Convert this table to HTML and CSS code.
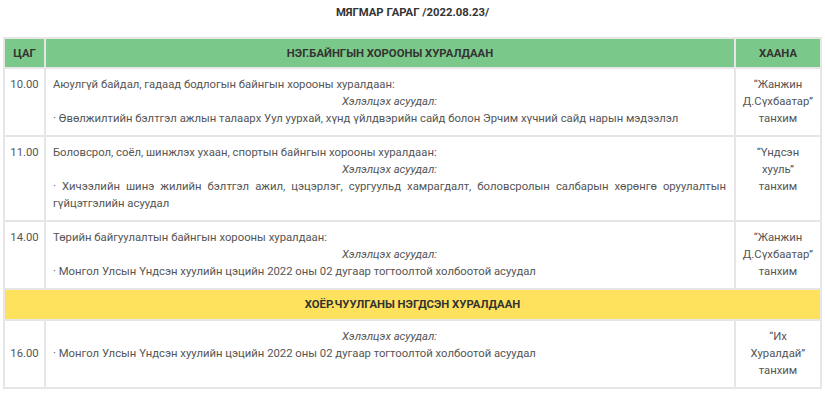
FILE: index.html
```html
<!DOCTYPE html>
<html lang="mn">
<head>
<meta charset="utf-8">
<title>Мягмар гараг</title>
<link rel="stylesheet" href="styles.css">
</head>
<body>
<div class="page">
  <h1 class="day-title">МЯГМАР ГАРАГ /2022.08.23/</h1>
  <table class="schedule">
    <colgroup>
      <col class="col-time">
      <col class="col-topic">
      <col class="col-place">
    </colgroup>
    <thead>
      <tr class="head-green">
        <th>ЦАГ</th>
        <th>НЭГ.БАЙНГЫН ХОРООНЫ ХУРАЛДААН</th>
        <th>ХААНА</th>
      </tr>
    </thead>
    <tbody>
      <tr>
        <td class="time">10.00</td>
        <td class="topic">
          <p>Аюулгүй байдал, гадаад бодлогын байнгын хорооны хуралдаан:</p>
          <p class="sub">Хэлэлцэх асуудал:</p>
          <p class="item">· Өвөлжилтийн бэлтгэл ажлын талаарх Уул уурхай, хүнд үйлдвэрийн сайд болон Эрчим хүчний сайд нарын мэдээлэл</p>
        </td>
        <td class="place">“Жанжин<br>Д.Сүхбаатар”<br>танхим</td>
      </tr>
      <tr>
        <td class="time">11.00</td>
        <td class="topic">
          <p>Боловсрол, соёл, шинжлэх ухаан, спортын байнгын хорооны хуралдаан:</p>
          <p class="sub">Хэлэлцэх асуудал:</p>
          <p class="item">· Хичээлийн шинэ жилийн бэлтгэл ажил, цэцэрлэг, сургуульд хамрагдалт, боловсролын салбарын хөрөнгө оруулалтын гүйцэтгэлийн асуудал</p>
        </td>
        <td class="place">“Үндсэн<br>хууль”<br>танхим</td>
      </tr>
      <tr>
        <td class="time">14.00</td>
        <td class="topic">
          <p>Төрийн байгуулалтын байнгын хорооны хуралдаан:</p>
          <p class="sub">Хэлэлцэх асуудал:</p>
          <p class="item">· Монгол Улсын Үндсэн хуулийн цэцийн 2022 оны 02 дугаар тогтоолтой холбоотой асуудал</p>
        </td>
        <td class="place">“Жанжин<br>Д.Сүхбаатар”<br>танхим</td>
      </tr>
      <tr class="head-yellow">
        <th colspan="3">ХОЁР.ЧУУЛГАНЫ НЭГДСЭН ХУРАЛДААН</th>
      </tr>
      <tr>
        <td class="time middle">16.00</td>
        <td class="topic">
          <p class="sub">Хэлэлцэх асуудал:</p>
          <p class="item">· Монгол Улсын Үндсэн хуулийн цэцийн 2022 оны 02 дугаар тогтоолтой холбоотой асуудал</p>
          <p class="blank">&nbsp;</p>
        </td>
        <td class="place">“Их<br>Хуралдай”<br>танхим</td>
      </tr>
    </tbody>
  </table>
</div>
</body>
</html>
```

FILE: styles.css
```css
html, body {
  margin: 0;
  padding: 0;
  background: #ffffff;
}

body {
  font-family: Roboto, "Liberation Sans", Arial, sans-serif;
  font-size: 11.3px;
  line-height: 17px;
  color: #555555;
}

.page {
  padding: 4px 3px 0 3px;
}

.day-title {
  margin: 0 0 16px 0;
  text-align: center;
  font-size: 11.3px;
  line-height: 17px;
  font-weight: bold;
  color: #333333;
}

.schedule {
  width: 819px;
  border-collapse: collapse;
  table-layout: fixed;
}

.col-time { width: 41px; }
.col-place { width: 86px; }

.schedule th,
.schedule td {
  border: 2px solid #e6e6e6;
  vertical-align: top;
}

.schedule th {
  padding: 6px 4px 5px;
  font-weight: bold;
  color: #333333;
  text-align: center;
}

.head-green th {
  background: #7bc98a;
}

.head-yellow th {
  background: #fee15c;
  padding: 6px 4px 6px;
}

.schedule td {
  padding: 7px 8px 8px 7px;
}

.schedule td.time {
  padding: 7px 2px 8px;
  text-align: center;
}

.schedule td.time.middle {
  vertical-align: middle;
}

.schedule td.place {
  padding: 7px 0 8px;
  text-align: center;
}

.topic p {
  margin: 0;
}

.topic .sub {
  text-align: center;
  font-style: italic;
}

.topic .item {
  text-align: justify;
}
```
